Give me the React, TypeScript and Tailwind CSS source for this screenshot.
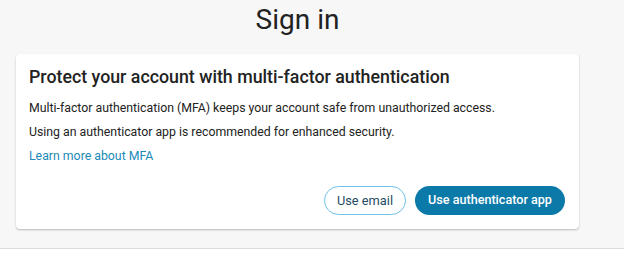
export default function App() {
  return (
    <div className="w-[624px] h-[264px] bg-white font-['Roboto',sans-serif] text-[#222]">
      <div className="h-[249px] bg-[#f7f7f7] border-b border-[#dcdcdc] pt-[3px]">
        <div className="ml-[16px] w-[563px]">
          <h1 className="text-center text-[28px] leading-[34px] text-[#222]">Sign in</h1>
          <div className="mt-[17px] bg-white rounded-[4px] shadow-[0_1px_2px_rgba(0,0,0,0.25)] pl-[13px] pr-[14px] pt-[11px] pb-[14px]">
            <h2 className="text-[17.8px] leading-[24px] font-medium">
              Protect your account with multi-factor authentication
            </h2>
            <p className="mt-[10px] text-[12.3px] leading-[18px]">
              Multi-factor authentication (MFA) keeps your account safe from unauthorized access.
            </p>
            <p className="mt-[6px] text-[12.3px] leading-[18px]">
              Using an authenticator app is recommended for enhanced security.
            </p>
            <a href="#" className="block mt-[6px] text-[12.3px] leading-[18px] text-[#1b8ab8]">
              Learn more about MFA
            </a>
            <div className="mt-[21px] flex justify-end gap-[9px]">
              <button className="h-[29px] w-[82px] rounded-full border border-[#6fc1e6] bg-white text-[12.8px] text-[#1f4d63]">
                Use email
              </button>
              <button className="h-[29px] w-[150px] rounded-full bg-[#0b7aa8] text-[12.6px] font-medium text-white">
                Use authenticator app
              </button>
            </div>
          </div>
        </div>
      </div>
    </div>
  );
}
